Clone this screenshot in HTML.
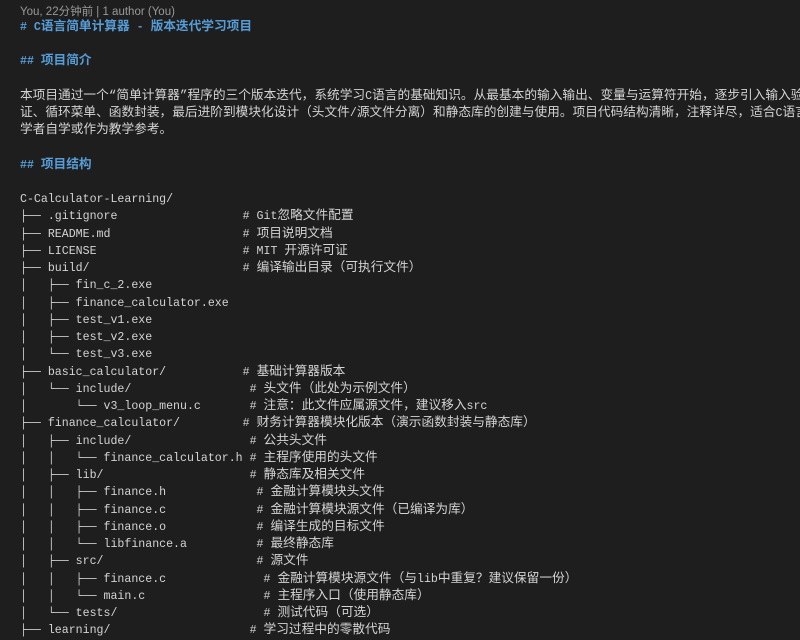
<!DOCTYPE html>
<html><head><meta charset="utf-8"><style>
html,body{margin:0;padding:0;background:#1e1e1e;width:800px;height:639px;overflow:hidden}
.lens{position:absolute;left:20px;top:4px;font:11.5px "Liberation Sans","Noto Sans CJK SC",sans-serif;color:#999;line-height:16px;white-space:nowrap}
pre{position:absolute;left:20px;top:18.6px;margin:0;font-family:"Liberation Mono","Noto Sans CJK SC",monospace;font-size:11.6px;line-height:17.25px;color:#d4d4d4;white-space:pre}
i{font-style:normal;font-size:12.7px;line-height:1}
.h{color:#569cd6;font-weight:bold}
</style></head><body>
<div class="lens">You, 22分钟前 | 1 author (You)</div>
<pre><span class="h"># C<i>语言简单计算器</i> - <i>版本迭代学习项目</i></span>

<span class="h">## <i>项目简介</i></span>

<i>本项目通过一个“简单计算器”程序的三个版本迭代，系统学习</i>C<i>语言的基础知识。从最基本的输入输出、变量与运算符开始，逐步引入输入验</i>
<i>证、循环菜单、函数封装，最后进阶到模块化设计（头文件</i>/<i>源文件分离）和静态库的创建与使用。项目代码结构清晰，注释详尽，适合</i>C<i>语言初</i>
<i>学者自学或作为教学参考。</i>

<span class="h">## <i>项目结构</i></span>

C-Calculator-Learning/
├── .gitignore                  # Git<i>忽略文件配置</i>
├── README.md                   # <i>项目说明文档</i>
├── LICENSE                     # MIT <i>开源许可证</i>
├── build/                      # <i>编译输出目录（可执行文件）</i>
│   ├── fin_c_2.exe
│   ├── finance_calculator.exe
│   ├── test_v1.exe
│   ├── test_v2.exe
│   └── test_v3.exe
├── basic_calculator/           # <i>基础计算器版本</i>
│   └── include/                 # <i>头文件（此处为示例文件）</i>
│       └── v3_loop_menu.c       # <i>注意：此文件应属源文件，建议移入</i>src
├── finance_calculator/         # <i>财务计算器模块化版本（演示函数封装与静态库）</i>
│   ├── include/                 # <i>公共头文件</i>
│   │   └── finance_calculator.h # <i>主程序使用的头文件</i>
│   ├── lib/                     # <i>静态库及相关文件</i>
│   │   ├── finance.h             # <i>金融计算模块头文件</i>
│   │   ├── finance.c             # <i>金融计算模块源文件（已编译为库）</i>
│   │   ├── finance.o             # <i>编译生成的目标文件</i>
│   │   └── libfinance.a          # <i>最终静态库</i>
│   ├── src/                      # <i>源文件</i>
│   │   ├── finance.c              # <i>金融计算模块源文件（与</i>lib<i>中重复？建议保留一份）</i>
│   │   └── main.c                 # <i>主程序入口（使用静态库）</i>
│   └── tests/                     # <i>测试代码（可选）</i>
├── learning/                    # <i>学习过程中的零散代码</i>
</pre>
</body></html>
